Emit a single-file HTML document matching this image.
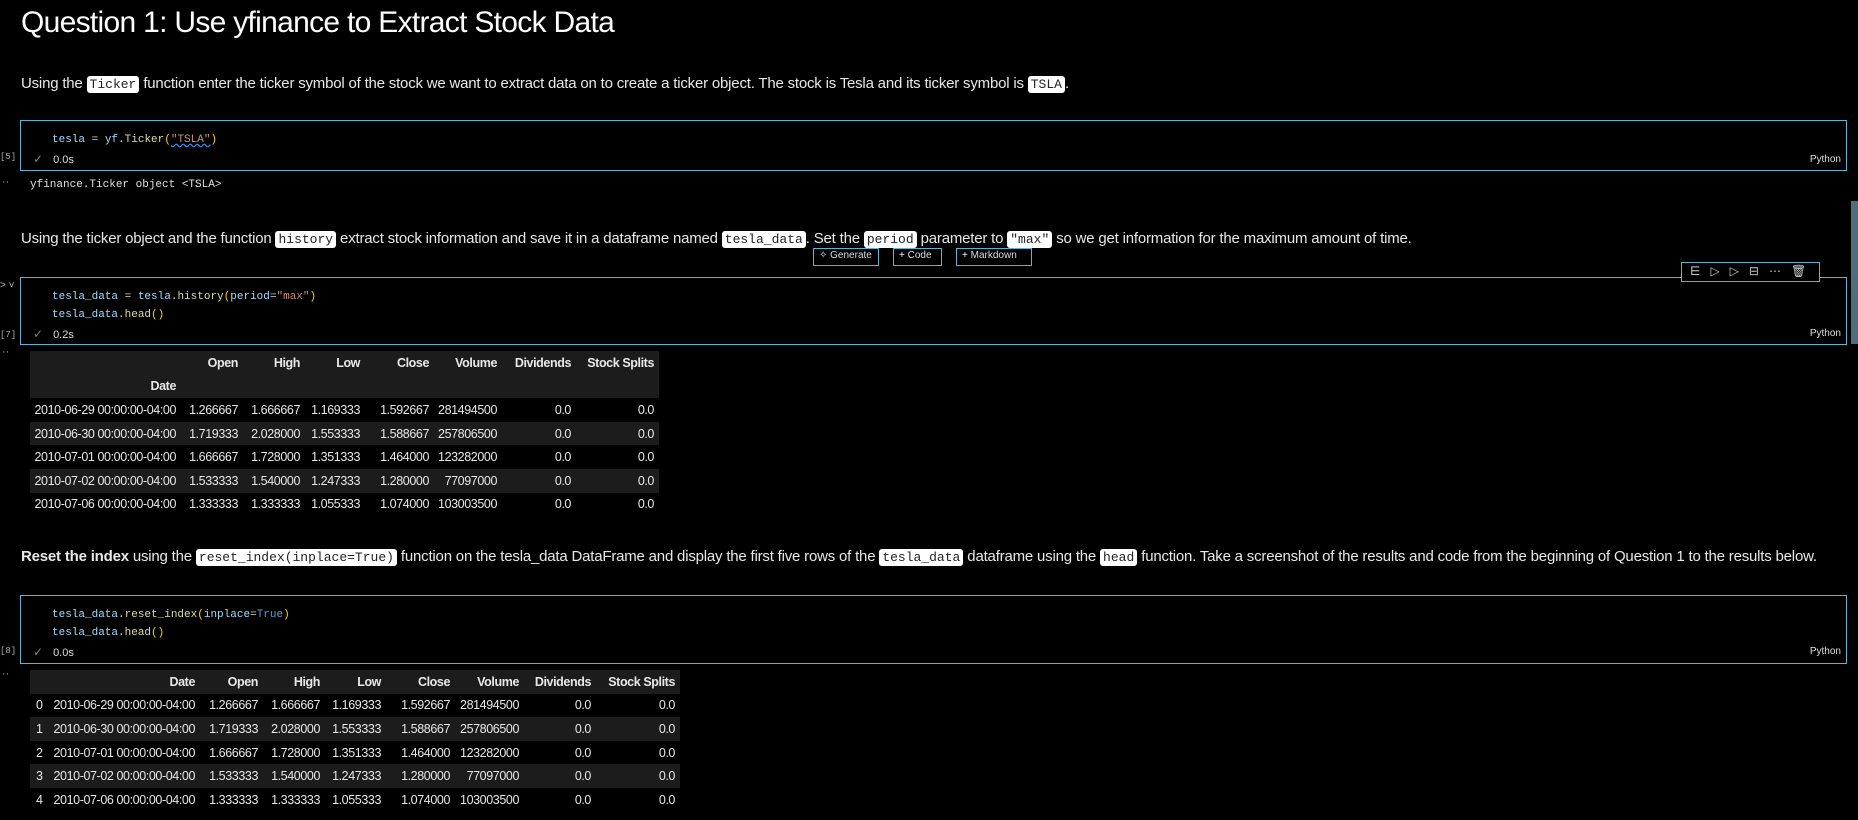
<!DOCTYPE html>
<html><head><meta charset="utf-8"><style>
*{margin:0;padding:0;box-sizing:border-box}
body{width:1858px;height:820px;background:#000;color:#e6e6e6;font-family:"Liberation Sans",sans-serif;position:relative;overflow:hidden}
.a{position:absolute;white-space:nowrap}
h1{position:absolute;left:21px;top:6px;font-weight:400;font-size:30px;color:#fff;letter-spacing:-0.7px}
.p{position:absolute;left:21px;font-size:15px;color:#e8e8e8;letter-spacing:-0.2px;white-space:nowrap}
.c{font-family:"Liberation Mono",monospace;font-size:13px;background:#fff;color:#222;border-radius:3px;padding:1px 3px;letter-spacing:0}
.cell{position:absolute;left:20px;width:1827px;border:1px solid #5fb4d4}
.code{position:absolute;left:31px;font-family:"Liberation Mono",monospace;font-size:11px;color:#d4d4d4;white-space:pre}
.v{color:#9cdcfe}.f{color:#dcdcaa}.s{color:#ce9178}.b{color:#ffd700}.k{color:#569cd6}.w{color:#d4d4d4}
.st{position:absolute;left:12px;font-size:11px;color:#ddd}
.st i{font-style:normal;color:#6a9955;margin-right:10px;font-size:12px}
.py{position:absolute;right:5px;font-size:10px;color:#ddd}
.n{position:absolute;left:0;font-family:"Liberation Mono",monospace;font-size:9px;color:#aaa}
table{position:absolute;border-collapse:collapse;font-size:12.5px;letter-spacing:-0.4px;color:#e8e8e8}
td,th{height:23.6px;text-align:right;padding:0 5px 0 0;white-space:nowrap}
th{font-weight:700}
tr.g{background:#1c1c1c}
.btn{position:absolute;top:248px;height:18px;border:1px solid #5fb4d4;font-size:10px;color:#ddd;padding:1px 5px;background:#000}
</style></head><body>
<h1>Question 1: Use yfinance to Extract Stock Data</h1>
<div class="p" style="top:75px">Using the <span class="c">Ticker</span> function enter the ticker symbol of the stock we want to extract data on to create a ticker object. The stock is Tesla and its ticker symbol is <span class="c">TSLA</span>.</div>

<div class="cell" style="top:120px;height:51px">
<div class="code" style="top:13px"><span class="v">tesla</span> = <span class="v">yf</span>.<span class="f">Ticker</span><span class="b">(</span><span class="s" style="text-decoration:underline wavy #3794ff">"TSLA"</span><span class="b">)</span></div>
<div class="st" style="top:31px"><i>✓</i>0.0s</div>
<div class="py" style="top:33px">Python</div>
</div>
<div class="n" style="top:152px">[5]</div>
<div class="a" style="left:2px;top:176px;color:#aaa;font-size:11px">··</div>
<div class="a" style="left:30px;top:179px;font-family:'Liberation Mono',monospace;font-size:11px;color:#e0e0e0">yfinance.Ticker object &lt;TSLA&gt;</div>

<div class="p" style="top:230px">Using the ticker object and the function <span class="c">history</span> extract stock information and save it in a dataframe named <span class="c">tesla_data</span>. Set the <span class="c">period</span> parameter to <span class="c">"max"</span> so we get information for the maximum amount of time.</div>
<div class="btn" style="left:813px;width:66px">✧ Generate</div>
<div class="btn" style="left:893px;width:49px"><span style="color:#fff">+</span> Code</div>
<div class="btn" style="left:956px;width:76px"><span style="color:#fff">+</span> Markdown</div>

<div class="cell" style="top:277px;height:68px">
<div class="code" style="top:13px"><span class="v">tesla_data</span> = <span class="v">tesla</span>.<span class="f">history</span><span class="b">(</span><span class="v">period</span>=<span class="s">"max"</span><span class="b">)</span></div>
<div class="code" style="top:31px"><span class="v">tesla_data</span>.<span class="f">head</span><span class="b">()</span></div>
<div class="st" style="top:49px"><i>✓</i>0.2s</div>
<div class="py" style="top:50px">Python</div>
</div>
<div class="a" style="left:1681px;top:262px;width:139px;height:20px;border:1px solid #5fb4d4;background:#000;font-size:12px;color:#ccc;letter-spacing:10px;padding:1px 0 0 8px">⋿▷▷⊟⋯🗑</div>
<div class="a" style="left:0;top:280px;font-size:10px;color:#bbb">&gt; ˅</div>
<div class="n" style="top:330px">[7]</div>
<div class="a" style="left:2px;top:346px;color:#aaa;font-size:11px">··</div>
<div class="a" style="left:1851px;top:201px;width:7px;height:143px;background:#4e6e7e"></div>

<table style="left:30px;top:351px;width:629px">
<tr class="g"><th style="width:151px"></th><th style="width:62px">Open</th><th style="width:62px">High</th><th style="width:60px">Low</th><th style="width:69px">Close</th><th style="width:68px">Volume</th><th style="width:74px">Dividends</th><th>Stock Splits</th></tr>
<tr class="g"><th>Date</th><td></td><td></td><td></td><td></td><td></td><td></td><td></td></tr>
<tr><th style="font-weight:400">2010-06-29 00:00:00-04:00</th><td>1.266667</td><td>1.666667</td><td>1.169333</td><td>1.592667</td><td>281494500</td><td>0.0</td><td>0.0</td></tr>
<tr class="g"><th style="font-weight:400">2010-06-30 00:00:00-04:00</th><td>1.719333</td><td>2.028000</td><td>1.553333</td><td>1.588667</td><td>257806500</td><td>0.0</td><td>0.0</td></tr>
<tr><th style="font-weight:400">2010-07-01 00:00:00-04:00</th><td>1.666667</td><td>1.728000</td><td>1.351333</td><td>1.464000</td><td>123282000</td><td>0.0</td><td>0.0</td></tr>
<tr class="g"><th style="font-weight:400">2010-07-02 00:00:00-04:00</th><td>1.533333</td><td>1.540000</td><td>1.247333</td><td>1.280000</td><td>77097000</td><td>0.0</td><td>0.0</td></tr>
<tr><th style="font-weight:400">2010-07-06 00:00:00-04:00</th><td>1.333333</td><td>1.333333</td><td>1.055333</td><td>1.074000</td><td>103003500</td><td>0.0</td><td>0.0</td></tr>
</table>

<div class="p" style="top:548px"><b>Reset the index</b> using the <span class="c">reset_index(inplace=True)</span> function on the tesla_data DataFrame and display the first five rows of the <span class="c">tesla_data</span> dataframe using the <span class="c">head</span> function. Take a screenshot of the results and code from the beginning of Question 1 to the results below.</div>

<div class="cell" style="top:595px;height:69px">
<div class="code" style="top:13px"><span class="v">tesla_data</span>.<span class="f">reset_index</span><span class="b">(</span><span class="v">inplace</span>=<span class="k">True</span><span class="b">)</span></div>
<div class="code" style="top:31px"><span class="v">tesla_data</span>.<span class="f">head</span><span class="b">()</span></div>
<div class="st" style="top:49px"><i>✓</i>0.0s</div>
<div class="py" style="top:50px">Python</div>
</div>
<div class="n" style="top:646px">[8]</div>
<div class="a" style="left:2px;top:668px;color:#aaa;font-size:11px">··</div>

<table style="left:30px;top:670px;width:650px">
<tr class="g"><th style="width:20px"></th><th style="width:150px">Date</th><th style="width:63px">Open</th><th style="width:62px">High</th><th style="width:61px">Low</th><th style="width:69px">Close</th><th style="width:69px">Volume</th><th style="width:72px">Dividends</th><th>Stock Splits</th></tr>
<tr><th style="text-align:left;padding-left:6px;font-weight:400">0</th><td>2010-06-29 00:00:00-04:00</td><td>1.266667</td><td>1.666667</td><td>1.169333</td><td>1.592667</td><td>281494500</td><td>0.0</td><td>0.0</td></tr>
<tr class="g"><th style="text-align:left;padding-left:6px;font-weight:400">1</th><td>2010-06-30 00:00:00-04:00</td><td>1.719333</td><td>2.028000</td><td>1.553333</td><td>1.588667</td><td>257806500</td><td>0.0</td><td>0.0</td></tr>
<tr><th style="text-align:left;padding-left:6px;font-weight:400">2</th><td>2010-07-01 00:00:00-04:00</td><td>1.666667</td><td>1.728000</td><td>1.351333</td><td>1.464000</td><td>123282000</td><td>0.0</td><td>0.0</td></tr>
<tr class="g"><th style="text-align:left;padding-left:6px;font-weight:400">3</th><td>2010-07-02 00:00:00-04:00</td><td>1.533333</td><td>1.540000</td><td>1.247333</td><td>1.280000</td><td>77097000</td><td>0.0</td><td>0.0</td></tr>
<tr><th style="text-align:left;padding-left:6px;font-weight:400">4</th><td>2010-07-06 00:00:00-04:00</td><td>1.333333</td><td>1.333333</td><td>1.055333</td><td>1.074000</td><td>103003500</td><td>0.0</td><td>0.0</td></tr>
</table>
</body></html>
